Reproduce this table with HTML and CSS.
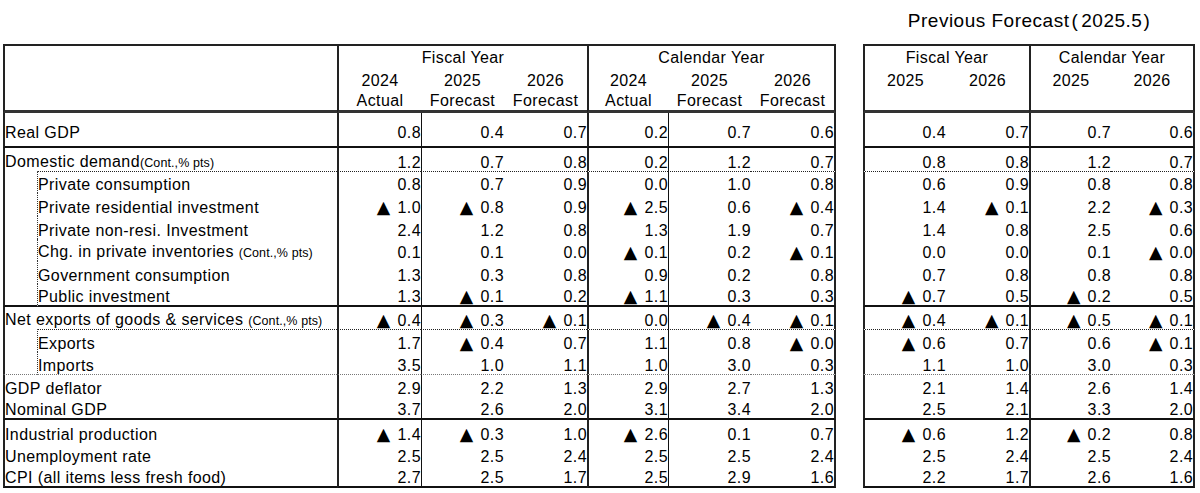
FILE: index.html
```html
<!DOCTYPE html>
<html lang="en">
<head>
<meta charset="utf-8">
<title>Forecast table</title>
<link rel="stylesheet" href="styles.css">
</head>
<body>
<div class="page">
  <div class="main-wrap">
    <table class="tbl main">
      <colgroup>
        <col class="w-ind"><col class="w-lab"><col class="w-84"><col class="w-83"><col class="w-83"><col class="w-81"><col class="w-83"><col class="w-85">
      </colgroup>
      <thead>
        <tr class="hr top">
          <th class="bl2 bb3" colspan="2" rowspan="3"></th>
          <th class="bl2" colspan="3">Fiscal Year</th>
          <th class="bl2 br2" colspan="3">Calendar Year</th>
        </tr>
        <tr class="hr">
          <th class="bl2">2024</th><th>2025</th><th>2026</th>
          <th class="bl2">2024</th><th>2025</th><th class="br2">2026</th>
        </tr>
        <tr class="hr hb">
          <th class="bl2">Actual</th><th>Forecast</th><th>Forecast</th>
          <th class="bl2">Actual</th><th>Forecast</th><th class="br2">Forecast</th>
        </tr>
      </thead>
      <tbody>
        <tr class="gdp sb">
          <td class="lab bl2" colspan="2">Real GDP</td>
          <td class="v bl2">0.8</td><td class="v bl1">0.4</td><td class="v">0.7</td>
          <td class="v bl2">0.2</td><td class="v bl1">0.7</td><td class="v br2">0.6</td>
        </tr>
        <tr class="br">
          <td class="lab bl2" colspan="2">Domestic demand<span class="note">(Cont.,% pts)</span></td>
          <td class="v bl2">1.2</td><td class="v bl1">0.7</td><td class="v">0.8</td>
          <td class="v bl2">0.2</td><td class="v bl1">1.2</td><td class="v br2">0.7</td>
        </tr>
        <tr class="br dt">
          <td class="ind bl2"></td><td class="sub bld">Private consumption</td>
          <td class="v bl2">0.8</td><td class="v bl1">0.7</td><td class="v">0.9</td>
          <td class="v bl2">0.0</td><td class="v bl1">1.0</td><td class="v br2">0.8</td>
        </tr>
        <tr class="br">
          <td class="ind bl2"></td><td class="sub bld">Private residential investment</td>
          <td class="v bl2"><span class="tri">▲</span> 1.0</td><td class="v bl1"><span class="tri">▲</span> 0.8</td><td class="v">0.9</td>
          <td class="v bl2"><span class="tri">▲</span> 2.5</td><td class="v bl1">0.6</td><td class="v br2"><span class="tri">▲</span> 0.4</td>
        </tr>
        <tr class="br">
          <td class="ind bl2"></td><td class="sub bld">Private non-resi. Investment</td>
          <td class="v bl2">2.4</td><td class="v bl1">1.2</td><td class="v">0.8</td>
          <td class="v bl2">1.3</td><td class="v bl1">1.9</td><td class="v br2">0.7</td>
        </tr>
        <tr class="br">
          <td class="ind bl2"></td><td class="sub bld">Chg. in private inventories <span class="note">(Cont.,% pts)</span></td>
          <td class="v bl2">0.1</td><td class="v bl1">0.1</td><td class="v">0.0</td>
          <td class="v bl2"><span class="tri">▲</span> 0.1</td><td class="v bl1">0.2</td><td class="v br2"><span class="tri">▲</span> 0.1</td>
        </tr>
        <tr class="br">
          <td class="ind bl2"></td><td class="sub bld">Government consumption</td>
          <td class="v bl2">1.3</td><td class="v bl1">0.3</td><td class="v">0.8</td>
          <td class="v bl2">0.9</td><td class="v bl1">0.2</td><td class="v br2">0.8</td>
        </tr>
        <tr class="br sb">
          <td class="ind bl2"></td><td class="sub bld">Public investment</td>
          <td class="v bl2">1.3</td><td class="v bl1"><span class="tri">▲</span> 0.1</td><td class="v">0.2</td>
          <td class="v bl2"><span class="tri">▲</span> 1.1</td><td class="v bl1">0.3</td><td class="v br2">0.3</td>
        </tr>
        <tr class="br">
          <td class="lab bl2" colspan="2">Net exports of goods &amp; services <span class="note">(Cont.,% pts)</span></td>
          <td class="v bl2"><span class="tri">▲</span> 0.4</td><td class="v bl1"><span class="tri">▲</span> 0.3</td><td class="v"><span class="tri">▲</span> 0.1</td>
          <td class="v bl2">0.0</td><td class="v bl1"><span class="tri">▲</span> 0.4</td><td class="v br2"><span class="tri">▲</span> 0.1</td>
        </tr>
        <tr class="br dt">
          <td class="ind bl2"></td><td class="sub bld">Exports</td>
          <td class="v bl2">1.7</td><td class="v bl1"><span class="tri">▲</span> 0.4</td><td class="v">0.7</td>
          <td class="v bl2">1.1</td><td class="v bl1">0.8</td><td class="v br2"><span class="tri">▲</span> 0.0</td>
        </tr>
        <tr class="br gb">
          <td class="ind bl2"></td><td class="sub bld">Imports</td>
          <td class="v bl2">3.5</td><td class="v bl1">1.0</td><td class="v">1.1</td>
          <td class="v bl2">1.0</td><td class="v bl1">3.0</td><td class="v br2">0.3</td>
        </tr>
        <tr class="br">
          <td class="lab bl2" colspan="2">GDP deflator</td>
          <td class="v bl2">2.9</td><td class="v bl1">2.2</td><td class="v">1.3</td>
          <td class="v bl2">2.9</td><td class="v bl1">2.7</td><td class="v br2">1.3</td>
        </tr>
        <tr class="br sb">
          <td class="lab bl2" colspan="2">Nominal GDP</td>
          <td class="v bl2">3.7</td><td class="v bl1">2.6</td><td class="v">2.0</td>
          <td class="v bl2">3.1</td><td class="v bl1">3.4</td><td class="v br2">2.0</td>
        </tr>
        <tr class="br">
          <td class="lab bl2" colspan="2">Industrial production</td>
          <td class="v bl2"><span class="tri">▲</span> 1.4</td><td class="v bl1"><span class="tri">▲</span> 0.3</td><td class="v">1.0</td>
          <td class="v bl2"><span class="tri">▲</span> 2.6</td><td class="v bl1">0.1</td><td class="v br2">0.7</td>
        </tr>
        <tr class="br">
          <td class="lab bl2" colspan="2">Unemployment rate</td>
          <td class="v bl2">2.5</td><td class="v bl1">2.5</td><td class="v">2.4</td>
          <td class="v bl2">2.5</td><td class="v bl1">2.5</td><td class="v br2">2.4</td>
        </tr>
        <tr class="br sb">
          <td class="lab bl2" colspan="2">CPI (all items less fresh food)</td>
          <td class="v bl2">2.7</td><td class="v bl1">2.5</td><td class="v">1.7</td>
          <td class="v bl2">2.5</td><td class="v bl1">2.9</td><td class="v br2">1.6</td>
        </tr>
      </tbody>
    </table>
  </div>

  <div class="prev-wrap">
    <div class="title">Previous Forecast<span class="par">(</span>2025.5<span class="par par-r">)</span></div>
    <table class="tbl prev">
      <colgroup>
        <col class="w-83"><col class="w-83"><col class="w-82"><col class="w-84">
      </colgroup>
      <thead>
        <tr class="hr top">
          <th class="bl2" colspan="2">Fiscal Year</th>
          <th class="bl2 br2" colspan="2">Calendar Year</th>
        </tr>
        <tr class="hr">
          <th class="bl2">2025</th><th>2026</th>
          <th class="bl2">2025</th><th class="br2">2026</th>
        </tr>
        <tr class="hr hb">
          <th class="bl2"></th><th></th>
          <th class="bl2"></th><th class="br2"></th>
        </tr>
      </thead>
      <tbody>
        <tr class="gdp sb">
          <td class="v bl2">0.4</td><td class="v">0.7</td><td class="v bl2">0.7</td><td class="v br2">0.6</td>
        </tr>
        <tr class="br">
          <td class="v bl2">0.8</td><td class="v">0.8</td><td class="v bl2">1.2</td><td class="v br2">0.7</td>
        </tr>
        <tr class="br dt">
          <td class="v bl2">0.6</td><td class="v">0.9</td><td class="v bl2">0.8</td><td class="v br2">0.8</td>
        </tr>
        <tr class="br">
          <td class="v bl2">1.4</td><td class="v"><span class="tri">▲</span> 0.1</td><td class="v bl2">2.2</td><td class="v br2"><span class="tri">▲</span> 0.3</td>
        </tr>
        <tr class="br">
          <td class="v bl2">1.4</td><td class="v">0.8</td><td class="v bl2">2.5</td><td class="v br2">0.6</td>
        </tr>
        <tr class="br">
          <td class="v bl2">0.0</td><td class="v">0.0</td><td class="v bl2">0.1</td><td class="v br2"><span class="tri">▲</span> 0.0</td>
        </tr>
        <tr class="br">
          <td class="v bl2">0.7</td><td class="v">0.8</td><td class="v bl2">0.8</td><td class="v br2">0.8</td>
        </tr>
        <tr class="br sb">
          <td class="v bl2"><span class="tri">▲</span> 0.7</td><td class="v">0.5</td><td class="v bl2"><span class="tri">▲</span> 0.2</td><td class="v br2">0.5</td>
        </tr>
        <tr class="br">
          <td class="v bl2"><span class="tri">▲</span> 0.4</td><td class="v"><span class="tri">▲</span> 0.1</td><td class="v bl2"><span class="tri">▲</span> 0.5</td><td class="v br2"><span class="tri">▲</span> 0.1</td>
        </tr>
        <tr class="br dt">
          <td class="v bl2"><span class="tri">▲</span> 0.6</td><td class="v">0.7</td><td class="v bl2">0.6</td><td class="v br2"><span class="tri">▲</span> 0.1</td>
        </tr>
        <tr class="br gb">
          <td class="v bl2">1.1</td><td class="v">1.0</td><td class="v bl2">3.0</td><td class="v br2">0.3</td>
        </tr>
        <tr class="br">
          <td class="v bl2">2.1</td><td class="v">1.4</td><td class="v bl2">2.6</td><td class="v br2">1.4</td>
        </tr>
        <tr class="br sb">
          <td class="v bl2">2.5</td><td class="v">2.1</td><td class="v bl2">3.3</td><td class="v br2">2.0</td>
        </tr>
        <tr class="br">
          <td class="v bl2"><span class="tri">▲</span> 0.6</td><td class="v">1.2</td><td class="v bl2"><span class="tri">▲</span> 0.2</td><td class="v br2">0.8</td>
        </tr>
        <tr class="br">
          <td class="v bl2">2.5</td><td class="v">2.4</td><td class="v bl2">2.5</td><td class="v br2">2.4</td>
        </tr>
        <tr class="br sb">
          <td class="v bl2">2.2</td><td class="v">1.7</td><td class="v bl2">2.6</td><td class="v br2">1.6</td>
        </tr>
      </tbody>
    </table>
  </div>
</div>
</body>
</html>
```

FILE: styles.css
```css
* {
  box-sizing: border-box;
}

html, body {
  margin: 0;
  padding: 0;
  background: #ffffff;
}

body {
  font-family: "Liberation Sans", Arial, "Noto Sans CJK JP", sans-serif;
  color: #000000;
}

.page {
  display: flex;
  gap: 27px;
  padding-left: 3px;
}

.main-wrap {
  padding-top: 44px;
}

.prev-wrap {
  display: flex;
  flex-direction: column;
}

.title {
  height: 44px;
  padding-top: 11px;
  font-size: 19px;
  line-height: 19px;
  letter-spacing: 0.5px;
  text-align: center;
  white-space: nowrap;
}

.par {
  margin: 0 3px 0 2px;
}

.par-r {
  margin: 0 0 0 1px;
}

/* ---------- tables ---------- */
.tbl {
  border-collapse: separate;
  border-spacing: 0;
  table-layout: fixed;
}

.main { width: 833px; }
.prev { width: 332px; }

.w-ind { width: 34px; }
.w-lab { width: 300px; }
.w-81 { width: 81px; }
.w-82 { width: 82px; }
.w-83 { width: 83px; }
.w-84 { width: 84px; }
.w-85 { width: 85px; }

.tbl th,
.tbl td {
  padding: 0;
  font-size: 16px;
  line-height: 16px;
  letter-spacing: 0.4px;
  font-weight: normal;
  white-space: nowrap;
  vertical-align: bottom;
  overflow: visible;
}

.tbl th {
  text-align: center;
  padding-bottom: 1px;
}

/* row heights */
.hr { height: 23px; }
.gdp { height: 35px; }
.br { height: 22.67px; }

.gdp td {
  vertical-align: middle;
  padding-top: 6px;
}

/* borders */
.bl2 { border-left: 2px solid #222; }
.bl1 { border-left: 1px solid #111; }
.br2 { border-right: 2px solid #222; }
.bld { border-left: 1px dotted #333; }
.bb3 { border-bottom: 3px solid #333; }

.top th { border-top: 2px solid #222; }
.hb th { border-bottom: 3px solid #333; }
.sb td { border-bottom: 2px solid #111; }
.dt td:not(.ind) { border-top: 1px dotted #222; }
.gb td { border-bottom: 1px dotted #777; }

/* cell content */
.lab { padding-left: 2px; }
.sub { padding-left: 4px; }

.v {
  text-align: right;
  padding-right: 4px;
  letter-spacing: 0;
}

.note {
  font-size: 12.5px;
  letter-spacing: 0.1px;
}

.tri {
  display: inline-block;
  font-family: "DejaVu Sans", sans-serif;
  font-size: 17.5px;
  line-height: 14px;
  margin-right: 2px;
}
```
